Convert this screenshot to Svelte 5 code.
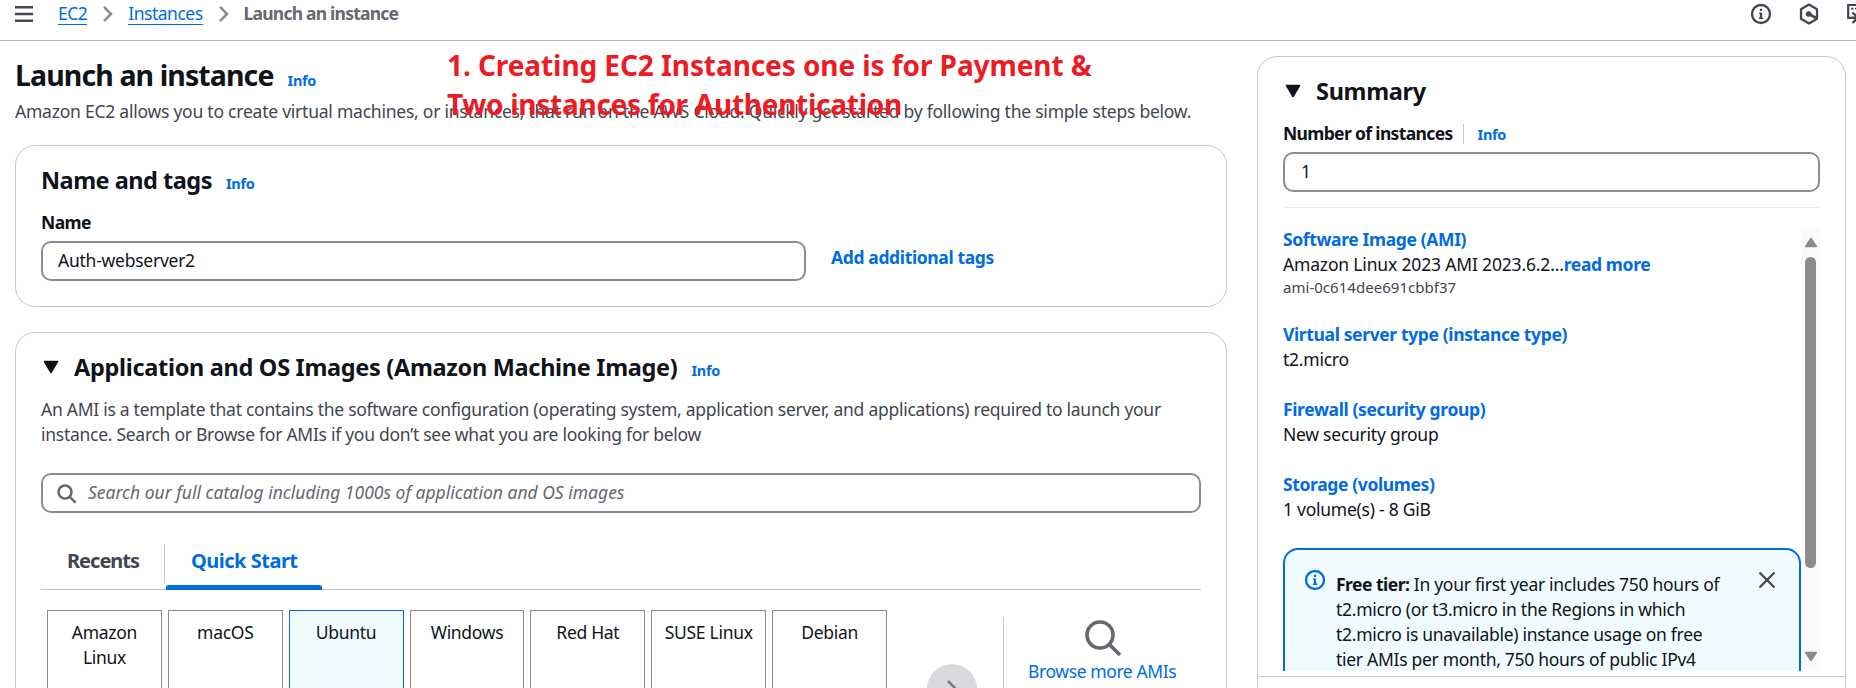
<script>
  const images = ['Amazon Linux', 'macOS', 'Ubuntu', 'Windows', 'Red Hat', 'SUSE Linux', 'Debian'];
  const selected = 'Ubuntu';
  const details = [
    { title: 'Virtual server type (instance type)', value: 't2.micro' },
    { title: 'Firewall (security group)', value: 'New security group' },
    { title: 'Storage (volumes)', value: '1 volume(s) - 8 GiB' }
  ];
</script>

{#snippet info()}<a class="info" href="#info">Info</a>{/snippet}

{#snippet triangle()}
  <svg class="triangle" width="16" height="14" viewBox="0 0 16 14"><path d="M1.5 1.5h13L8 12.5z" fill="#0f141a" stroke="#0f141a" stroke-width="1.6" stroke-linejoin="round" /></svg>
{/snippet}

{#snippet infoIcon()}
  <svg width="22" height="22" viewBox="0 0 22 22" fill="none" stroke="currentColor" stroke-width="2.3"><circle cx="11" cy="11" r="9" /><path d="M11 9.7V16M11 5.8v2.3" /><path d="M9.2 10.2H11M8.9 15.2h4.2" stroke-width="1.4" /></svg>
{/snippet}

{#snippet chevron()}
  <svg class="chevron" width="12" height="18" viewBox="0 0 12 18"><path d="M2 1.8 9 9l-7 7.2" fill="none" stroke="#8c8c94" stroke-width="2.6" /></svg>
{/snippet}

<header>
  <svg class="menu" width="18" height="18" viewBox="0 0 18 18"><path d="M0 2.2h18M0 9h18M0 15.8h18" stroke="#424650" stroke-width="2.4" /></svg>
  <nav>
    <a href="#ec2">EC2</a>{@render chevron()}<a href="#instances">Instances</a>{@render chevron()}<strong>Launch an instance</strong>
  </nav>
  <div class="tools">
    {@render infoIcon()}
    <svg width="22" height="22" viewBox="0 0 22 22" fill="none" stroke="currentColor" stroke-width="2.3"><path d="M11 1.6 19 6.2v9.6l-8 4.6-8-4.6V6.2z" stroke-linejoin="round" /><path d="m11 11 8 4.5" stroke-width="2.6" /><circle cx="10.6" cy="11" r="2.8" fill="currentColor" stroke="none" /></svg>
    <svg width="22" height="22" viewBox="0 0 22 22" fill="none" stroke="currentColor" stroke-width="2.2"><path d="M6 14.8H2.2V2h18v8" /><path d="M5 5.6h2.4M9 5.6h2.4M13 5.6h2.4" stroke-width="1.8" /><path d="M6.5 9.5 12 14.7 6.5 20M12 14.7H6" stroke-width="2.4" /></svg>
  </div>
</header>

<main>
  <section class="left">
    <div class="title"><h1>Launch an instance</h1>{@render info()}</div>
    <p class="lead">Amazon EC2 allows you to create virtual machines, or instances, that run on the AWS Cloud. Quickly get started by following the simple steps below.</p>

    <div class="card names">
      <div class="heading"><h2>Name and tags</h2>{@render info()}</div>
      <div class="label">Name</div>
      <div class="namerow">
        <div class="input">Auth-webserver2</div>
        <a class="link add" href="#tags">Add additional tags</a>
      </div>
    </div>

    <div class="card ami">
      <div class="heading">{@render triangle()}<h2>Application and OS Images (Amazon Machine Image)</h2>{@render info()}</div>
      <p class="about">An AMI is a template that contains the software configuration (operating system, application server, and applications) required to launch your<br />instance. Search or Browse for AMIs if you don’t see what you are looking for below</p>
      <div class="input search">
        <svg width="20" height="20" viewBox="0 0 20 20" fill="none" stroke="#656871" stroke-width="2.5"><circle cx="8" cy="8" r="6.5" /><path d="m12.6 12.6 6 6" /></svg>
        <em>Search our full catalog including 1000s of application and OS images</em>
      </div>
      <div class="tabs">
        <div class="tab">Recents</div>
        <div class="tab active">Quick Start</div>
      </div>
      <div class="picker">
        <div class="tiles">
          {#each images as name}
            <div class="tile" class:selected={name === selected}>{name}</div>
          {/each}
        </div>
        <div class="next"><svg width="12" height="20" viewBox="0 0 12 20"><path d="m2 2 8 8-8 8" fill="none" stroke="#7d7d85" stroke-width="2.6" /></svg></div>
        <div class="browse">
          <svg width="38" height="38" viewBox="0 0 38 38" fill="none" stroke="#656871" stroke-width="3.6"><circle cx="16" cy="16" r="13" /><path d="M25.2 25.2 36 36" /></svg>
          <a href="#browse">Browse more AMIs</a>
        </div>
      </div>
    </div>
  </section>

  <aside class="card">
    <div class="body">
      <div class="heading">{@render triangle()}<h2>Summary</h2></div>
      <div class="label count"><span>Number of instances</span><i></i>{@render info()}</div>
      <div class="input">1</div>
      <hr />
      <div class="scroller">
        <div class="content">
          <a class="link" href="#ami">Software Image (AMI)</a>
          <div class="image"><span>Amazon Linux 2023 AMI 2023.6.2...</span><a class="link" href="#more">read more</a></div>
          <small>ami-0c614dee691cbbf37</small>
          {#each details as d}
            <div class="detail"><a class="link" href="#detail">{d.title}</a><div>{d.value}</div></div>
          {/each}
          <div class="alert">
            <span class="alert-icon">{@render infoIcon()}</span>
            <p><b>Free tier:</b> In your first year includes 750 hours of<br />t2.micro (or t3.micro in the Regions in which<br />t2.micro is unavailable) instance usage on free<br />tier AMIs per month, 750 hours of public IPv4</p>
            <svg class="close" width="18" height="18" viewBox="0 0 18 18"><path d="m1.5 1.5 15 15m0-15-15 15" stroke="#424650" stroke-width="2.3" /></svg>
          </div>
        </div>
        <div class="bar">
          <svg width="14" height="11" viewBox="0 0 14 11"><path d="M7 1.5 12.3 9.5H1.7z" fill="#8b8b8b" stroke="#8b8b8b" stroke-width="1.6" stroke-linejoin="round" /></svg>
          <div class="thumb"></div>
          <svg class="down" width="14" height="11" viewBox="0 0 14 11"><path d="M7 9.5 1.7 1.5h10.6z" fill="#8b8b8b" stroke="#8b8b8b" stroke-width="1.6" stroke-linejoin="round" /></svg>
        </div>
      </div>
    </div>
    <div class="foot"></div>
  </aside>
</main>

<div class="note">1. Creating EC2 Instances one is for Payment &amp;<br /><span>Two instances for Authentication</span></div>

<style>
  :global(body) { background: #fff; overflow: hidden; }
  :global(#app) {
    position: relative; width: 1856px; height: 688px; overflow: hidden;
    display: flex; flex-direction: column;
    font: 400 17.5px/25px 'Noto Sans', sans-serif; letter-spacing: -0.25px; color: #0f141a;
  }
  * { box-sizing: border-box; }
  svg { display: block; flex: none; }
  h1, h2, p { margin: 0; }
  a { color: #006ce0; text-decoration: none; }

  header { flex: none; height: 41px; border-bottom: 1px solid #b4b4bb; display: flex; align-items: flex-start; padding-left: 15px; color: #424650; overflow: hidden; }
  .menu { margin-top: 5px; }
  nav { display: flex; margin: 1px 0 0 25px; white-space: nowrap; }
  nav a { border-bottom: 1px solid #006ce0; height: 24px; letter-spacing: -0.5px; }
  .chevron { margin: 4px 14px 0 15px; }
  nav strong { color: #656871; font-weight: 700; letter-spacing: -0.78px; }
  .tools { display: flex; gap: 26px; margin: 3px -12px 0 auto; }

  main { flex: 1; min-height: 0; display: grid; grid-template-columns: 1212px 589px; gap: 30px; padding: 15px 10px 0 15px; }
  .left, aside { min-width: 0; }
  .title, .heading { display: flex; align-items: baseline; white-space: nowrap; }
  .title { height: 38px; }
  h1 { font-size: 28.5px; line-height: 38px; letter-spacing: -0.9px; }
  h2 { font-size: 23.5px; line-height: 30px; letter-spacing: -0.31px; }
  .names h2 { letter-spacing: -0.5px; }
  .heading { height: 30px; }
  .info { font-size: 14.5px; font-weight: 700; line-height: 20px; margin-left: 14px; letter-spacing: -0.3px; }
  .lead { margin-top: 5px; color: #424650; white-space: nowrap; letter-spacing: -0.235px; }

  .card { border: 1px solid #c6c6cd; border-radius: 20px; background: #fff; padding: 19px 25px 0; }
  .names { height: 162px; margin-top: 21px; }
  .label { font-weight: 700; letter-spacing: -0.6px; margin-top: 15px; }
  .namerow { display: flex; gap: 25px; margin-top: 6px; }
  .namerow .input { width: 765px; }
  .input { height: 40px; border: 2px solid #8c8c94; border-radius: 10px; padding: 5px 15px; white-space: nowrap; }
  .link { font-weight: 700; letter-spacing: -0.37px; }
  .add { margin-top: 4px; }

  .ami { height: 400px; margin-top: 25px; }
  .triangle { align-self: center; margin: 0 15px 0 2px; }
  .about { margin-top: 15px; color: #424650; white-space: nowrap; letter-spacing: -0.275px; }
  .search { margin-top: 26px; display: flex; padding: 5px 14px; color: #656871; }
  .search svg { margin: 4px 11px 0 0; }
  .search em { letter-spacing: 0; }
  .tabs { display: flex; height: 60px; margin-top: 17px; border-bottom: 1px solid #c6c6cd; font-size: 20px; font-weight: 700; color: #424650; letter-spacing: -0.5px; white-space: nowrap; }
  .tab { position: relative; width: 124px; height: 60px; padding: 18px 0 0 26px; }
  .tab:first-child { letter-spacing: -1px; }
  .tab:first-child::after { content: ''; position: absolute; right: 0; top: 14px; height: 40px; border-right: 1px solid #c6c6cd; }
  .tab.active { color: #006ce0; width: 156px; padding-left: 25px; margin-left: 1px; }
  .tab.active::after { content: ''; position: absolute; left: 0; right: 0; bottom: 0; height: 5px; border-radius: 3px 3px 0 0; background: #006ce0; }

  .picker { display: flex; align-items: flex-start; margin: 20px 0 0 6px; }
  .tiles { display: grid; width: 840px; grid-template-columns: repeat(7, 1fr); gap: 6px; }
  .tile { height: 120px; border: 1px solid #8c8c94; padding: 9px 12px; text-align: center; letter-spacing: -0.3px; }
  .tile:nth-child(6) { padding-inline: 0; }
  .tile.selected { background: #f0fbff; border-color: #006ce0; }
  .next { width: 50px; height: 50px; border-radius: 50%; background: #d9d9dd; margin: 54px 0 0 40px; display: flex; align-items: center; justify-content: center; }
  .browse { margin: 7px 0 0 26px; height: 100px; border-left: 1px solid #c6c6cd; padding-left: 24px; display: flex; flex-direction: column; align-items: center; white-space: nowrap; letter-spacing: -0.4px; }
  .browse svg { margin: 2px 0 0 2px; }
  .browse a { margin-top: 2px; }

  aside.card { height: 700px; padding: 0; }
  .body { padding: 19px 25px 0; height: 619px; overflow: hidden; }
  .count { display: flex; align-items: center; margin-top: 15px; letter-spacing: -0.65px; }
  .count i { width: 1px; height: 20px; background: #c6c6cd; margin-left: 10px; }
  aside .info { margin-left: 14px; }
  aside .input { margin-top: 6px; padding-left: 16px; }
  hr { border: 0; height: 1px; background: #ebebf0; margin: 15px 0 0; }
  .scroller { display: flex; height: 444px; margin-top: 19px; overflow: hidden; }
  .content { width: 518px; flex: none; }
  .content > .link { display: block; }
  .image { display: flex; white-space: nowrap; letter-spacing: -0.17px; }
  small { display: block; font-size: 15px; line-height: 20px; color: #424650; letter-spacing: 0.03px; }
  .detail { margin-top: 25px; white-space: nowrap; }
  .alert { display: flex; align-items: flex-start; margin-top: 26px; height: 180px; border: 2px solid #006ce0; border-radius: 15px; background: #f0fbff; padding: 20px 23px 0 19px; white-space: nowrap; letter-spacing: -0.29px; }
  .alert-icon { color: #006ce0; margin-top: -1px; }
  .alert p { margin: 2px 0 0 10px; flex: 1; }
  .alert b { letter-spacing: -0.5px; }
  .close { margin-top: 1px; }
  .bar { width: 19px; margin-top: 1px; background: #fafafa; display: flex; flex-direction: column; align-items: center; padding: 9px 0; }
  .thumb { width: 11px; height: 311px; border-radius: 6px; background: #8b8b8b; margin-top: 9px; }
  .down { margin-top: auto; }
  .foot { border-top: 1px solid #c6c6cd; }

  .note { position: absolute; left: 447px; top: 46px; font-size: 28px; line-height: 39px; font-weight: 700; color: #ed1c24; letter-spacing: -0.08px; white-space: nowrap; }
  .note span { letter-spacing: -0.27px; }
</style>
